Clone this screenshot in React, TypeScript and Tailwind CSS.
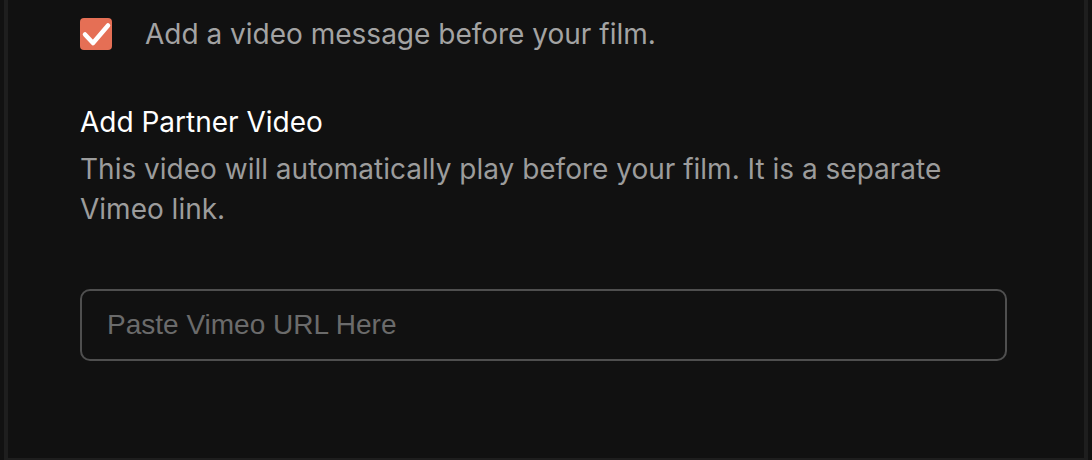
import { useState } from "react"

const App = () => {
  const [checked, setChecked] = useState<boolean>(true)
  const [url, setUrl] = useState<string>("")

  return (
    <div className="h-[460px] w-full overflow-hidden bg-[#111111] px-1 font-['Inter',sans-serif]">
      <div className="h-[460px] border-x-4 border-b-2 border-[#1e1e1e] bg-[#111111] px-[72px] pt-[14px]">
        {/* toggle row */}
        <label className="flex cursor-pointer items-center gap-[33px]">
          <button
            type="button"
            onClick={() => setChecked(!checked)}
            className={
              checked
                ? "flex h-8 w-8 items-center justify-center rounded-[4px] bg-[#e56f55]"
                : "flex h-8 w-8 items-center justify-center rounded-[4px] border-2 border-[#555555]"
            }
          >
            {checked && (
              <svg width="32" height="32" viewBox="0 0 32 32" fill="none">
                <path
                  d="M5 16.5 L13 25 L28 7.5"
                  stroke="white"
                  strokeWidth="4.5"
                  strokeLinecap="round"
                  strokeLinejoin="round"
                />
              </svg>
            )}
          </button>
          <span className="text-[28px] leading-[40px] text-[#a3a3a3]">
            Add a video message before your film.
          </span>
        </label>

        {/* partner video */}
        <div className="mt-[48px]">
          <h3 className="text-[28px] leading-[40px] text-white">Add Partner Video</h3>
          <p className="mt-[7px] max-w-[900px] text-[28px] leading-[40px] text-[#9c9c9c]">
            This video will automatically play before your film. It is a separate Vimeo link.
          </p>
          <input
            value={url}
            onChange={(e) => setUrl(e.target.value)}
            placeholder="Paste Vimeo URL Here"
            className="mt-[60px] h-[72px] w-[927px] rounded-[10px] border-2 border-[#4f4f4f] bg-transparent px-[25px] font-['Liberation_Sans',sans-serif] text-[28px] text-white outline-none placeholder:text-[#6b6b6b]"
          />
        </div>
      </div>
    </div>
  )
}

export default App
